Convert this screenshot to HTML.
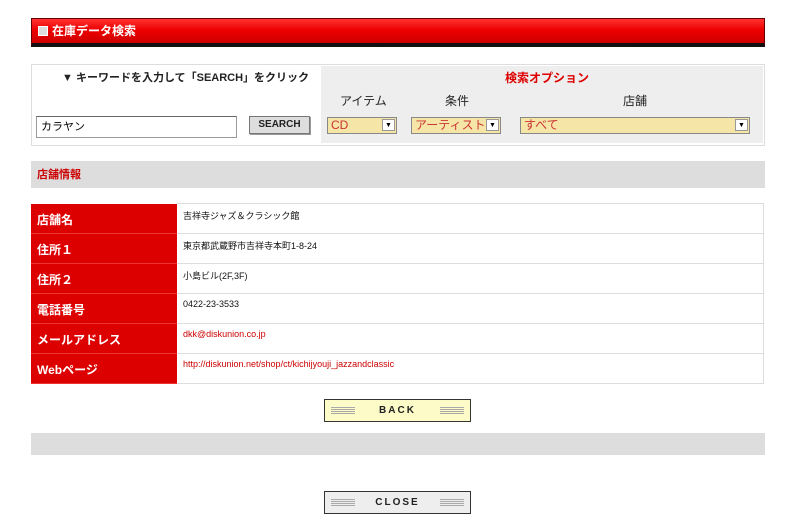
<!DOCTYPE html>
<html><head><meta charset="utf-8"><style>
*{margin:0;padding:0;box-sizing:border-box}
body{width:800px;height:531px;background:#fff;position:relative;font-family:"Liberation Sans","Noto Sans CJK JP",sans-serif;overflow:hidden}
.a{position:absolute}
.hdr{left:31px;top:18px;width:734px;height:29px;background:linear-gradient(#f33,#e00 45%,#c00);border:1px solid #600;border-bottom:4px solid #111;color:#fff;font-size:12px;font-weight:bold;line-height:24px;padding-left:6px}
.hdr i{display:inline-block;width:10px;height:10px;background:#ddd;border:1px solid #fff;vertical-align:-1px;margin-right:4px}
.box{left:31px;top:64px;width:734px;height:82px;border:1px solid #ddd}
.grey{left:321px;top:66px;width:442px;height:77px;background:#eee}
.t{font-size:12px;color:#222;white-space:nowrap}
.inp{border:1px solid #999;border-top-color:#666;background:#fff;font-size:11px;padding-left:4px;line-height:20px}
.sel{background:#f5e6a8;border:1px solid #888;font-size:12px;color:#c33;padding-left:3px;line-height:15px}
.sel b{position:absolute;right:1px;top:1px;width:13px;height:12px;background:#fff;border:1px solid #999;font-size:7px;color:#000;text-align:center;line-height:11px}
.btn{border:1px solid #777;background:#ddd;font-size:10px;font-weight:bold;text-align:center;line-height:16px;color:#222;box-shadow:1px 1px 0 #999}
.bar{left:31px;width:734px;background:#ddd}
table{position:absolute;left:31px;top:203px;width:733px;border-collapse:collapse}
td{height:30px;border-bottom:1px solid #ddd;font-size:9px;color:#111;vertical-align:top;padding-top:5px}
td.l{width:146px;background:#d00;color:#fff;font-size:12px;font-weight:bold;padding:7px 0 0 6px;border-bottom:1px solid #e33}
td.v{padding-left:6px;border-right:1px solid #ddd}
tr:first-child td.v{border-top:1px solid #ddd}
.red{color:#c00}
.b2{width:147px;height:23px;border:1px solid #333;font-size:10px;letter-spacing:2px;font-weight:bold;text-align:center;line-height:21px;color:#222}
.b2:before,.b2:after{content:"";position:absolute;top:7px;width:24px;height:7px;background:repeating-linear-gradient(#aaa 0 1px,transparent 1px 2px)}
.b2:before{left:6px}.b2:after{right:6px}
</style></head><body>
<div class="a hdr"><i></i>在庫データ検索</div>
<div class="a box"></div>
<div class="a grey"></div>
<div class="a t" style="left:62px;top:69px;font-weight:bold;font-size:11px">▼ キーワードを入力して「SEARCH」をクリック</div>
<div class="a t" style="left:505px;top:69px;font-weight:bold;color:#d00">検索オプション</div>
<div class="a t" style="left:340px;top:92px">アイテム</div>
<div class="a t" style="left:445px;top:92px">条件</div>
<div class="a t" style="left:623px;top:92px">店舗</div>
<div class="a inp" style="left:36px;top:116px;width:201px;height:22px">カラヤン</div>
<div class="a btn" style="left:249px;top:116px;width:61px;height:18px">SEARCH</div>
<div class="a sel" style="left:327px;top:117px;width:70px;height:17px">CD<b>▼</b></div>
<div class="a sel" style="left:411px;top:117px;width:90px;height:17px">アーティスト<b>▼</b></div>
<div class="a sel" style="left:520px;top:117px;width:230px;height:17px">すべて<b>▼</b></div>
<div class="a bar" style="top:161px;height:27px"></div>
<div class="a t" style="left:37px;top:166px;font-weight:bold;color:#c00;font-size:11px">店舗情報</div>
<table>
<tr><td class="l">店舗名</td><td class="v">吉祥寺ジャズ＆クラシック館</td></tr>
<tr><td class="l">住所１</td><td class="v">東京都武蔵野市吉祥寺本町1-8-24</td></tr>
<tr><td class="l">住所２</td><td class="v">小島ビル(2F,3F)</td></tr>
<tr><td class="l">電話番号</td><td class="v">0422-23-3533</td></tr>
<tr><td class="l">メールアドレス</td><td class="v red">dkk@diskunion.co.jp</td></tr>
<tr><td class="l">Webページ</td><td class="v red">http://diskunion.net/shop/ct/kichijyouji_jazzandclassic</td></tr>
</table>
<div class="a b2" style="left:324px;top:399px;background:#fdfbc8">BACK</div>
<div class="a bar" style="top:433px;height:22px"></div>
<div class="a b2" style="left:324px;top:491px;background:#eee">CLOSE</div>
</body></html>
